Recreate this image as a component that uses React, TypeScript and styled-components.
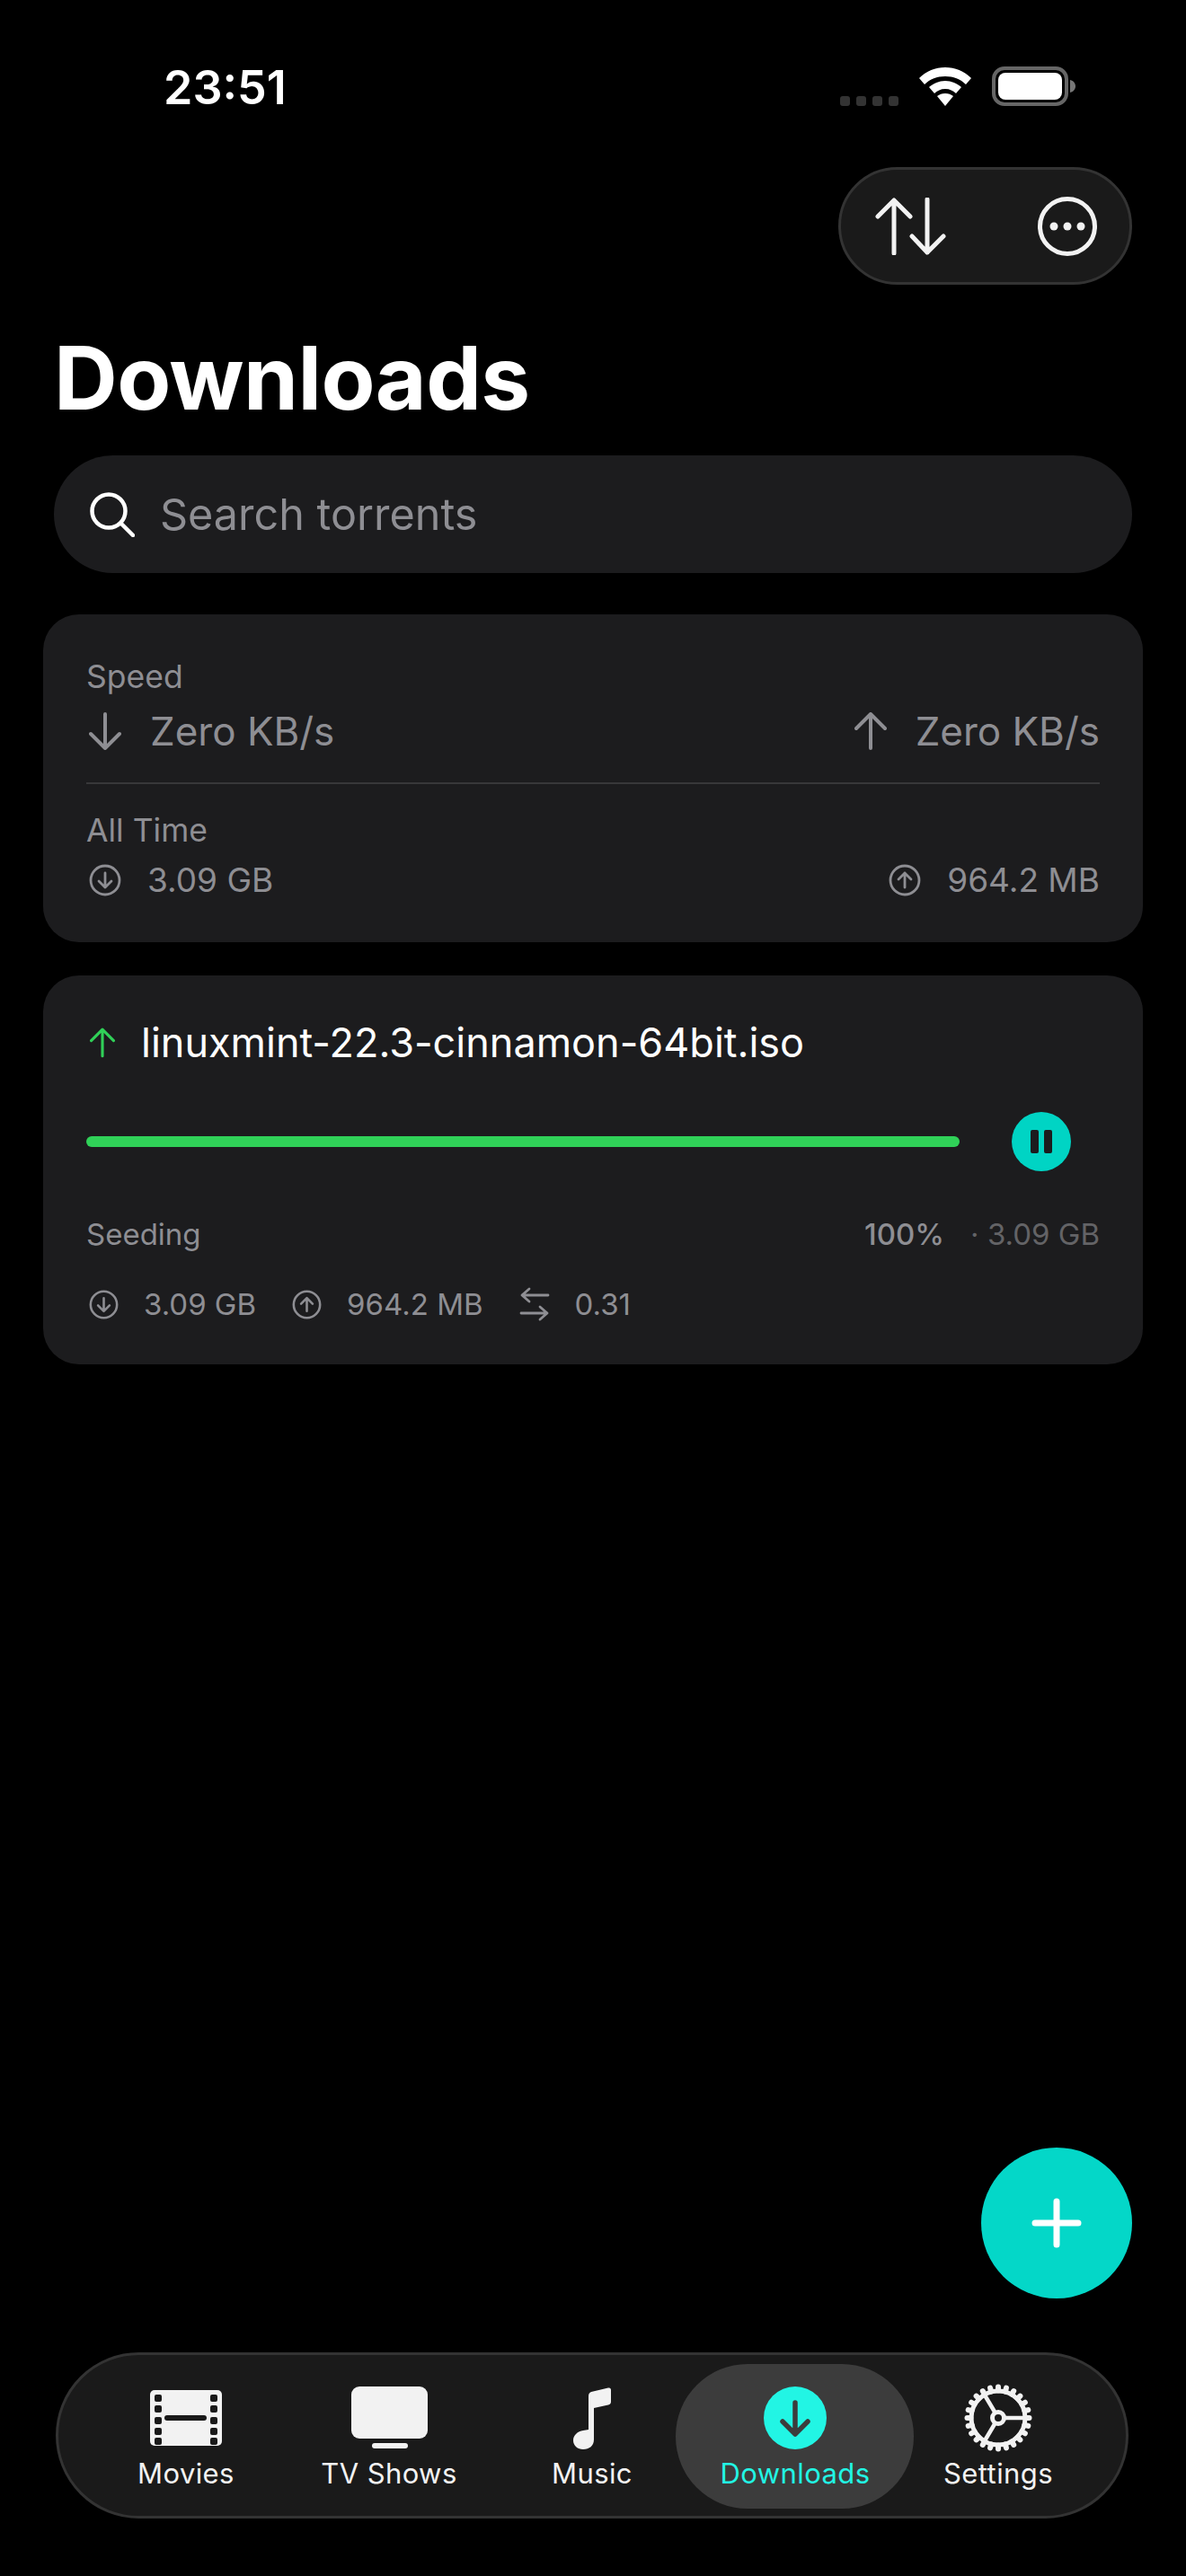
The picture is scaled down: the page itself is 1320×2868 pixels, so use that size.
import styled, { createGlobalStyle } from 'styled-components'

const GlobalStyle = createGlobalStyle`
  html, body {
    margin: 0;
    padding: 0;
    background: #000;
  }

  * {
    box-sizing: border-box;
  }
`

const Screen = styled.div`
  position: relative;
  width: 1320px;
  height: 2868px;
  display: flex;
  flex-direction: column;
  background: #000;
  color: #fff;
  font-family: Inter, 'Liberation Sans', sans-serif;
`

const StatusBar = styled.div`
  height: 186px;
  flex: none;
  display: flex;
  justify-content: space-between;
  padding: 0 122px 0 182px;
`

const Clock = styled.div`
  margin-top: 64px;
  font-size: 52px;
  line-height: 68px;
  font-weight: 600;
`

const StatusIcons = styled.div`
  height: 118px;
  display: flex;
  align-items: flex-end;
  gap: 23px;
  padding-top: 75px;

  svg {
    display: block;
  }
`

const TopActions = styled.div`
  display: flex;
  justify-content: flex-end;
  padding: 0 60px;
`

const ActionPill = styled.div`
  width: 327px;
  height: 131px;
  display: flex;
  align-items: center;
  justify-content: space-between;
  padding: 0 36px 0 38px;
  border-radius: 66px;
  background: #1a1a1a;
  border: 3px solid #333;
`

const Title = styled.h1`
  margin: 46px 0 0;
  padding: 0 60px;
  font-size: 98px;
  line-height: 116px;
  font-weight: 700;
  letter-spacing: -0.6px;
`

const SearchField = styled.div`
  margin: 28px 60px 0;
  height: 131px;
  display: flex;
  align-items: center;
  gap: 28px;
  padding: 0 40px;
  border-radius: 66px;
  background: #1c1c1e;
  font-size: 48.5px;
  color: #8e8e93;
`

const Cards = styled.div`
  margin: 46px 48px 0;
  display: flex;
  flex-direction: column;
  gap: 37px;
`

const Card = styled.section`
  border-radius: 40px;
  background: #1c1c1e;
  padding: 48px 48px 47px;
`

const SmallLabel = styled.div<{ $size?: number }>`
  font-size: ${(p) => p.$size ?? 35.5}px;
  line-height: 44px;
  color: #8e8e93;
`

const SpreadRow = styled.div`
  display: flex;
  align-items: center;
  justify-content: space-between;
`

const SpeedRow = styled(SpreadRow)`
  margin-top: 11px;
`

const TotalRow = styled(SpreadRow)`
  margin-top: 10px;
`

const Metric = styled.div<{ $size: number; $gap: number }>`
  display: flex;
  align-items: center;
  gap: ${(p) => p.$gap}px;
  font-size: ${(p) => p.$size}px;
  color: #8e8e93;

  svg {
    display: block;
    flex: none;
  }
`

const LeadMetric = styled(Metric)`
  padding-left: 3px;
`

const Divider = styled.div`
  height: 2px;
  margin: 30px 0 30px;
  background: #38383a;
`

const NameRow = styled.div`
  display: flex;
  align-items: center;
  gap: 29px;
  padding-left: 4px;
  font-size: 45px;
  line-height: 54px;
`

const ProgressRow = styled.div`
  margin-top: 50px;
  display: flex;
  align-items: center;
  padding-right: 32px;
  justify-content: space-between;
`

const ProgressTrack = styled.div`
  width: 972px;
  height: 12px;
  border-radius: 6px;
  background: #30d158;
`

const PauseButton = styled.div`
  width: 66px;
  height: 66px;
  border-radius: 50%;
  display: flex;
  align-items: center;
  justify-content: center;
  gap: 6px;
  background: #00d4c4;
`

const PauseBar = styled.span`
  width: 9px;
  height: 26px;
  border-radius: 2px;
  background: #1c1c1e;
`

const StatusLine = styled(SpreadRow)`
  margin-top: 48px;
`

const Totals = styled.div`
  display: flex;
  align-items: baseline;
  font-size: 33px;
  line-height: 44px;
`

const Percent = styled.span`
  font-weight: 500;
  color: #8e8e93;
`

const TotalSize = styled.span`
  margin-left: 29px;
  color: #636366;
`

const StatsRow = styled.div`
  margin-top: 36px;
  display: flex;
  align-items: center;
  gap: 40px;
  padding-left: 3px;
`

const Fab = styled.div`
  position: absolute;
  left: 1092px;
  top: 2391px;
  width: 168px;
  height: 168px;
  border-radius: 50%;
  display: flex;
  align-items: center;
  justify-content: center;
  background: #04d7c8;
`

const TabBar = styled.nav`
  margin: auto 64px 64px 62px;
  height: 185px;
  display: grid;
  grid-template-columns: repeat(5, 226px);
  justify-content: center;
  border-radius: 93px;
  background: #1a1a1a;
  border: 3px solid #333;
`

const Tab = styled.div<{ $active?: boolean }>`
  position: relative;
  display: flex;
  flex-direction: column;
  align-items: center;
  color: ${(p) => (p.$active ? '#22f5e4' : '#f2f2f2')};

  ${(p) =>
    p.$active &&
    `
    &::before {
      content: '';
      position: absolute;
      left: -20px;
      right: -19px;
      top: 10px;
      bottom: 8px;
      border-radius: 80px;
      background: #3c3c3c;
    }
  `}
`

const TabIcon = styled.div`
  position: relative;
  height: 76px;
  margin-top: 32px;
  display: flex;
  align-items: center;
  justify-content: center;

  svg {
    display: block;
  }
`

const TabLabel = styled.div`
  position: relative;
  margin-top: 4px;
  font-size: 31px;
  line-height: 40px;
  font-weight: 400;
  letter-spacing: 0.4px;
`

const Wifi = () => (
  <svg width="58" height="43" viewBox="0 0 58 43">
    <path d="M29 0C18 0 8 4 0 12l6 7c6-6 14-9 23-9s17 3 23 9l6-7C50 4 40 0 29 0z" fill="#fff" />
    <path d="M29 15c-7 0-13 3-18 7l6 7c3-3 7-5 12-5s9 2 12 5l6-7c-5-4-11-7-18-7z" fill="#fff" />
    <path d="M29 29c-4 0-6 1-9 3l9 11 9-11c-3-2-5-3-9-3z" fill="#fff" />
  </svg>
)

const Battery = () => (
  <svg width="94" height="44" viewBox="0 0 94 44">
    <rect x="2" y="2" width="81" height="40" rx="12" fill="none" stroke="#666" strokeWidth="4" />
    <rect x="7" y="7" width="71" height="30" rx="8" fill="#fff" />
    <path d="M87 15c4 1 6 4 6 7s-2 6-6 7z" fill="#777" />
  </svg>
)

const SignalDots = () => (
  <svg width="65" height="11" viewBox="0 0 65 11">
    {[0, 18, 36, 54].map((x) => (
      <rect key={x} x={x} width="11" height="11" rx="3" fill="#333" />
    ))}
  </svg>
)

const UpDownArrows = () => (
  <svg width="80" height="64" viewBox="0 0 80 64" fill="none" stroke="#f2f2f2" strokeWidth="5" strokeLinecap="round" strokeLinejoin="round">
    <path d="M21 62V3M3 21 21 3l18 18" />
    <path d="M58 2v59M41 43l17 18 18-18" />
  </svg>
)

const MoreCircle = () => (
  <svg width="66" height="66" viewBox="0 0 66 66">
    <circle cx="33" cy="33" r="30.5" fill="none" stroke="#f2f2f2" strokeWidth="5" />
    <circle cx="18" cy="33" r="4.5" fill="#f2f2f2" />
    <circle cx="33" cy="33" r="4.5" fill="#f2f2f2" />
    <circle cx="48" cy="33" r="4.5" fill="#f2f2f2" />
  </svg>
)

const SearchIcon = () => (
  <svg width="50" height="50" viewBox="0 0 50 50" fill="none" stroke="#fff" strokeWidth="4.5" strokeLinecap="round">
    <circle cx="21" cy="21" r="18.5" />
    <path d="M35 35l13 13" />
  </svg>
)

const ArrowDown = () => (
  <svg width="36" height="42" viewBox="0 0 36 42" fill="none" stroke="#8e8e93" strokeWidth="4" strokeLinecap="round" strokeLinejoin="round">
    <path d="M18 2v38M2 24l16 16 16-16" />
  </svg>
)

const ArrowUp = ({ color = '#8e8e93', width = 36, height = 42 }) => (
  <svg width={width} height={height} viewBox="0 0 36 42" fill="none" stroke={color} strokeWidth="4" strokeLinecap="round" strokeLinejoin="round">
    <path d="M18 40V2M2 18 18 2l16 16" />
  </svg>
)

const CircleArrow = ({ size, up }: { size: number; up?: boolean }) => (
  <svg width={size} height={size} viewBox="0 0 36 36" fill="none" stroke="#8e8e93" strokeWidth="2.8" strokeLinecap="round" strokeLinejoin="round">
    <circle cx="18" cy="18" r="16" />
    {up ? <path d="M18 26V10M11 17l7-7 7 7" /> : <path d="M18 10v16M11 19l7 7 7-7" />}
  </svg>
)

const SwapArrows = () => (
  <svg width="34" height="38" viewBox="0 0 34 38" fill="none" stroke="#8e8e93" strokeWidth="2.8" strokeLinecap="round" strokeLinejoin="round">
    <path d="M32 9H3M11 2 3 9l8 7" />
    <path d="M2 29h29M23 22l8 7-8 7" />
  </svg>
)

const PlusIcon = () => (
  <svg width="56" height="56" viewBox="0 0 56 56" stroke="#fff" strokeWidth="7" strokeLinecap="round">
    <path d="M28 4v48M4 28h48" />
  </svg>
)

const FilmIcon = () => (
  <svg width="80" height="62" viewBox="0 0 80 62">
    <rect width="80" height="62" rx="5" fill="#f2f2f2" />
    {[6, 18, 31, 43, 54].flatMap((y) => [
      <rect key={`l${y}`} x="5" y={y - 1} width="8" height="8" rx="2" fill="#1a1a1a" />,
      <rect key={`r${y}`} x="67" y={y - 1} width="8" height="8" rx="2" fill="#1a1a1a" />,
    ])}
    <rect x="16" y="28" width="47" height="6" rx="3" fill="#1a1a1a" />
  </svg>
)

const TvIcon = () => (
  <svg width="85" height="70" viewBox="0 0 85 70">
    <rect width="85" height="58" rx="9" fill="#f2f2f2" />
    <rect x="23" y="63" width="40" height="6" rx="3" fill="#f2f2f2" />
  </svg>
)

const NoteIcon = () => (
  <svg width="42" height="69" viewBox="0 0 42 69">
    <path
      d="M17 10c0-3 1-4 3-5L39 .5c2-.4 3 .6 3 2.500v13c0 2-1 3-3 3.500L23 23v35c0 7-5 11-12 11-6 0-11-4-11-10 0-6 5-10 11-11l6-1z"
      fill="#f2f2f2"
    />
  </svg>
)

const DownloadsIcon = () => (
  <svg width="70" height="70" viewBox="0 0 70 70">
    <circle cx="35" cy="35" r="35" fill="#22f5e4" />
    <path d="M35 18v35M21 39l14 14 14-14" fill="none" stroke="#3c3c3c" strokeWidth="5.5" strokeLinecap="round" strokeLinejoin="round" />
  </svg>
)

const GearIcon = () => (
  <svg width="76" height="76" viewBox="0 0 76 76" fill="none" stroke="#f2f2f2" strokeLinecap="round">
    <circle cx="38" cy="38" r="30" strokeWidth="5" />
    {Array.from({ length: 24 }, (_, i) => (
      <path key={i} d="M38 3.5v4" strokeWidth="6" transform={`rotate(${i * 15} 38 38)`} />
    ))}
    <path d="M45 38h24M34.5 32 22 11M34.5 44 22 65" strokeWidth="4.5" />
    <circle cx="38" cy="38" r="6.5" strokeWidth="5" />
  </svg>
)

const tabs = [
  { label: 'Movies', icon: <FilmIcon /> },
  { label: 'TV Shows', icon: <TvIcon /> },
  { label: 'Music', icon: <NoteIcon /> },
  { label: 'Downloads', icon: <DownloadsIcon />, active: true },
  { label: 'Settings', icon: <GearIcon /> },
]

const App = () => (
  <Screen>
    <GlobalStyle />
    <StatusBar>
      <Clock>23:51</Clock>
      <StatusIcons>
        <SignalDots />
        <Wifi />
        <Battery />
      </StatusIcons>
    </StatusBar>

    <TopActions>
      <ActionPill>
        <UpDownArrows />
        <MoreCircle />
      </ActionPill>
    </TopActions>

    <Title>Downloads</Title>

    <SearchField>
      <SearchIcon />
      Search torrents
    </SearchField>

    <Cards>
      <Card>
        <SmallLabel>Speed</SmallLabel>
        <SpeedRow>
          <LeadMetric $size={44} $gap={32}>
            <ArrowDown />
            Zero KB/s
          </LeadMetric>
          <Metric $size={44} $gap={32}>
            <ArrowUp />
            Zero KB/s
          </Metric>
        </SpeedRow>
        <Divider />
        <SmallLabel>All Time</SmallLabel>
        <TotalRow>
          <LeadMetric $size={37} $gap={29}>
            <CircleArrow size={36} />
            3.09 GB
          </LeadMetric>
          <Metric $size={37} $gap={29}>
            <CircleArrow size={36} up />
            964.2 MB
          </Metric>
        </TotalRow>
      </Card>

      <Card>
        <NameRow>
          <ArrowUp color="#30d158" width={28} height={34} />
          linuxmint-22.3-cinnamon-64bit.iso
        </NameRow>
        <ProgressRow>
          <ProgressTrack />
          <PauseButton>
            <PauseBar />
            <PauseBar />
          </PauseButton>
        </ProgressRow>
        <StatusLine>
          <SmallLabel $size={33}>Seeding</SmallLabel>
          <Totals>
            <Percent>100%</Percent>
            <TotalSize>· 3.09 GB</TotalSize>
          </Totals>
        </StatusLine>
        <StatsRow>
          <Metric $size={33} $gap={28}>
            <CircleArrow size={33} />
            3.09 GB
          </Metric>
          <Metric $size={33} $gap={28}>
            <CircleArrow size={33} up />
            964.2 MB
          </Metric>
          <Metric $size={33} $gap={28}>
            <SwapArrows />
            0.31
          </Metric>
        </StatsRow>
      </Card>
    </Cards>

    <Fab>
      <PlusIcon />
    </Fab>

    <TabBar>
      {tabs.map((tab) => (
        <Tab key={tab.label} $active={tab.active}>
          <TabIcon>{tab.icon}</TabIcon>
          <TabLabel>{tab.label}</TabLabel>
        </Tab>
      ))}
    </TabBar>
  </Screen>
)

export default App
